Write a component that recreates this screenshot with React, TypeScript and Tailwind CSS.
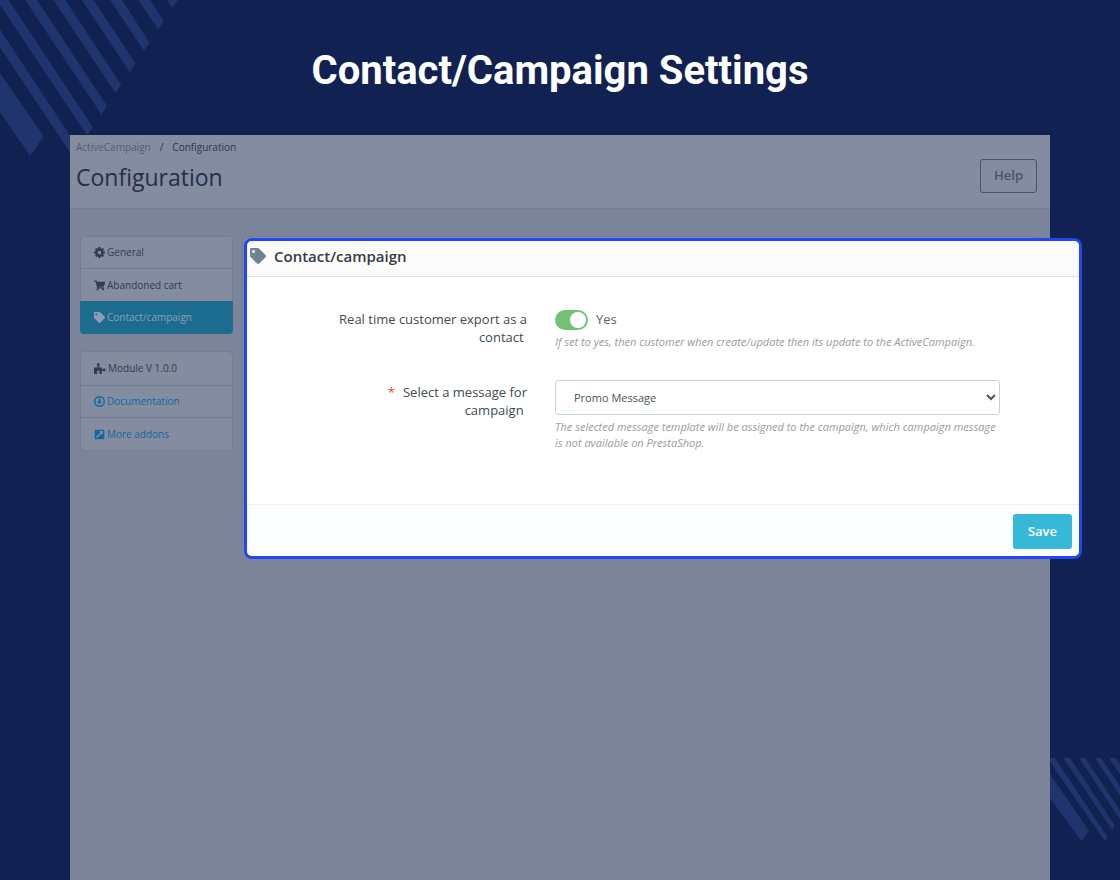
import type { ReactNode } from "react";
import { FaExternalLinkSquareAlt, FaShoppingCart, FaTag } from "react-icons/fa";

function CornerStripes() {
  const rows = [0, 1, 2, 3, 4, 5, 6, 7];
  return (
    <svg aria-hidden="true" className="absolute left-0 top-0 h-40 w-[180px] fill-[#20356d]" viewBox="0 0 180 160">
      {rows.map((k) => (
        <polygon
          key={k}
          points={`${166.7 - 28.3 * k},0 ${178.5 - 28.3 * k},0 ${178 - 14.2 * k},${21.2 * k} ${172.3 - 14.2 * k},${8.3 + 21.2 * k}`}
        />
      ))}
      <polygon points="0,73 43.7,136.3 30.3,156 0,112" />
    </svg>
  );
}

function BottomStripes() {
  return (
    <svg aria-hidden="true" className="absolute bottom-[38px] right-0 h-[84px] w-[70px] fill-[#20356d]" viewBox="0 0 70 84">
      <polygon points="0,16 39,72.7 31.7,83.3 0,40" />
      <polygon points="0,0 5,0 57.5,79 55,83.3 0,4" />
      <polygon points="13.3,0 20,0 65,67.7 62.3,72" />
      <polygon points="29,0 35.3,0 70,52.5 70,61.5" />
      <polygon points="45,0 51,0 70,28.5 70,37.5" />
      <polygon points="59,0 65.7,0 70,6.5 70,16.5" />
    </svg>
  );
}

function CogIcon() {
  return (
    <svg aria-hidden="true" viewBox="0 0 1536 1536" className="size-[11px] shrink-0 fill-current">
      <path d="M1024 768q0-106-75-181t-181-75-181 75-75 181 75 181 181 75 181-75 75-181zm512-109v222q0 12-8 23t-20 13l-185 28q-19 54-39 91 35 50 107 138 10 12 10 25t-9 23q-27 37-99 108t-94 71q-12 0-26-9l-138-108q-44 23-91 38-16 136-29 186-7 28-36 28h-222q-14 0-24.5-8.5t-11.5-21.5l-28-184q-49-16-90-37l-141 107q-10 9-25 9-14 0-25-11-126-114-165-168-7-10-7-23 0-12 8-23 15-21 51-66.5t54-70.5q-27-50-41-99l-183-27q-13-2-21-12.500t-8-23.500v-222q0-12 8-23t19-13l186-28q14-46 39-92-40-57-107-138-10-12-10-24 0-10 9-23 26-36 98.500-107.500t94.500-71.500q13 0 26 10l138 107q44-23 91-38 16-136 29-186 7-28 36-28h222q14 0 24.500 8.500t11.500 21.500l28 184q49 16 90 37l142-107q9-9 24-9 13 0 25 10 129 119 165 170 7 8 7 22 0 12-8 23-15 21-51 66.500t-54 70.500q26 50 41 98l183 28q13 2 21 12.500t8 23.500z" />
    </svg>
  );
}

function PuzzleIcon() {
  return (
    <svg aria-hidden="true" viewBox="0 0 12 11" className="h-[11px] w-3 shrink-0 fill-current">
      <circle cx="4.3" cy="1.6" r="1.5" />
      <circle cx="10.3" cy="7" r="1.4" />
      <path d="M0 4.500h3.500V2.500h1.600v2h2.700v1.800h2.200v1.400H7.800V11H5.400V9.200c.4-.5.300-1.700-1.100-1.700s-1.500 1.200-1.100 1.700V11H0z" />
    </svg>
  );
}

function CircleDownIcon() {
  return (
    <svg aria-hidden="true" viewBox="0 0 12 12" className="size-[11px] shrink-0 fill-current">
      <path fillRule="evenodd" d="M6 0a6 6 0 1 1 0 12A6 6 0 0 1 6 0zm0 1.600a4.400 4.400 0 1 0 0 8.800 4.400 4.400 0 0 0 0-8.800z" />
      <path d="M5 3h2v3h1.800L6 9 3.200 6H5z" />
    </svg>
  );
}

type ItemProps = { icon: ReactNode; children: ReactNode; tone?: string; size?: string };

function SideItem({ icon, children, tone = "text-[#303b55]", size = "h-8 pl-[13px]" }: ItemProps) {
  return (
    <li>
      <a href="#" className={`flex items-center gap-[2px] text-[10px] ${size} ${tone}`}>
        {icon}
        <span>{children}</span>
      </a>
    </li>
  );
}

function CampaignDialog() {
  return (
    <form
      aria-labelledby="dialog-title"
      className="absolute -right-[46px] left-px top-px overflow-hidden rounded-lg border-[3px] border-[#2147f5] bg-white text-[#414a52]"
    >
      <header className="flex h-9 items-center gap-2 border-b border-[#dbe4e8] bg-[#fbfbfb] pb-[5px] pl-[3px]">
        <FaTag aria-hidden="true" className="size-4 text-[#6b868d]" />
        <h2 id="dialog-title" className="text-[15px] font-semibold leading-5 text-[#363a41]">
          Contact/campaign
        </h2>
      </header>
      <div className="flex flex-col gap-[30px] pb-[53px] pl-[92px] pr-[79px] pt-[33px]">
        <div className="flex gap-7">
          <label htmlFor="export" className="w-[188px] shrink-0 text-right text-[13px] leading-[18px]">
            Real time customer export as a contact&nbsp;
          </label>
          <div className="min-w-0 grow">
            <label className="flex h-5 items-center gap-2 text-[13px] text-[#5d6269]">
              <input id="export" type="checkbox" role="switch" defaultChecked className="peer sr-only" />
              <span className="flex h-5 w-[33px] items-center rounded-full bg-[#b3c7cd] px-[2px] peer-checked:justify-end peer-checked:bg-[#72c279]">
                <span className="size-4 rounded-full bg-white" />
              </span>
              Yes
            </label>
            <p className="mt-1 text-[11px] italic leading-4 text-[#9b9b9b]">
              If set to yes, then customer when create/update then its update to the ActiveCampaign.
            </p>
          </div>
        </div>
        <div className="flex gap-7">
          <label htmlFor="message" className="w-[188px] shrink-0 pl-10 pt-[3px] text-right text-[13px] leading-[18px]">
            <span className="mr-2 text-[#f0442c]">*</span>
            Select a message for campaign&nbsp;
          </label>
          <div className="min-w-0 grow">
            <select
              id="message"
              className="h-[35px] w-full rounded-[3px] border border-[#c3d6db] bg-white pl-[14px] text-[11px] text-[#4d5259]"
            >
              <option>Promo Message</option>
            </select>
            <p className="mt-1 text-[11px] italic leading-4 text-[#9b9b9b]">
              The selected message template will be assigned to the campaign, which campaign message is not available on
              PrestaShop.
            </p>
          </div>
        </div>
      </div>
      <footer className="flex justify-end border-t border-[#eaf0f3] bg-[#fbfdfe] px-[7px] pb-[7px] pt-[9px]">
        <button type="submit" className="h-[35px] rounded-[3px] bg-[#36b8d8] px-[15px] text-[13px] font-semibold text-white">
          Save
        </button>
      </footer>
    </form>
  );
}

export default function App() {
  return (
    <div className="relative flex min-h-screen flex-col overflow-hidden bg-[#112151] font-['Open_Sans',sans-serif]">
      <CornerStripes />
      <BottomStripes />
      <h1 className="pb-[39px] pt-[46px] text-center font-['Roboto',sans-serif] text-[40px] font-bold leading-[50px] text-white">
        Contact/Campaign Settings
      </h1>
      <main className="relative mx-[70px] flex grow flex-col bg-[#7c8499]">
        <header className="flex justify-between border-b border-[#737c92] bg-[#848c9f] pb-[15px] pl-[6px] pr-[13px]">
          <div>
            <nav aria-label="Breadcrumb" className="flex pt-1 text-[10px] leading-4 text-[#283652]">
              <a href="#" className="text-[#525d76]">
                ActiveCampaign
              </a>
              <span className="mx-[9px]">/</span>
              <span>Configuration</span>
            </nav>
            <h2 className="mt-[6px] text-[23px] leading-8 text-[#232f4b]">Configuration</h2>
          </div>
          <button
            type="button"
            className="mt-6 h-[34px] rounded-[3px] border border-[#44546f] px-[13px] text-[13px] font-semibold text-[#44546f]"
          >
            Help
          </button>
        </header>
        <div className="flex items-start gap-[9px] pl-[10px] pr-[13px] pt-[27px]">
          <nav aria-label="Sections" className="flex w-[153px] shrink-0 flex-col gap-[17px]">
            <ul className="divide-y divide-[#737c92] rounded border border-[#757d93] bg-[#848c9f]">
              <SideItem icon={<CogIcon />} size="h-[31px] pl-[13px]">
                General
              </SideItem>
              <SideItem icon={<FaShoppingCart className="size-[11px]" />}>Abandoned cart</SideItem>
              <SideItem
                icon={<FaTag className="size-[11px]" />}
                size="-m-px h-[33px] rounded-b pl-[14px]"
                tone="bg-[#1c6c90] text-[#8f9db3]"
              >
                Contact/campaign
              </SideItem>
            </ul>
            <ul className="divide-y divide-[#737c92] rounded border border-[#757d93] bg-[#848c9f]">
              <SideItem icon={<PuzzleIcon />} size="h-[33px] pl-[13px]">
                Module V 1.0.0
              </SideItem>
              <SideItem icon={<CircleDownIcon />} size="h-[31px] pl-[13px]" tone="text-[#11689e]">
                Documentation
              </SideItem>
              <SideItem icon={<FaExternalLinkSquareAlt className="size-[11px]" />} tone="text-[#11689e]">
                More addons
              </SideItem>
            </ul>
          </nav>
          <section className="relative min-w-0 grow rounded border border-[#757d93] bg-[#7f879b]">
            <div className="h-[38px] border-b border-[#757d93]" />
            <div className="h-[270px]" />
            <CampaignDialog />
          </section>
        </div>
      </main>
    </div>
  );
}
